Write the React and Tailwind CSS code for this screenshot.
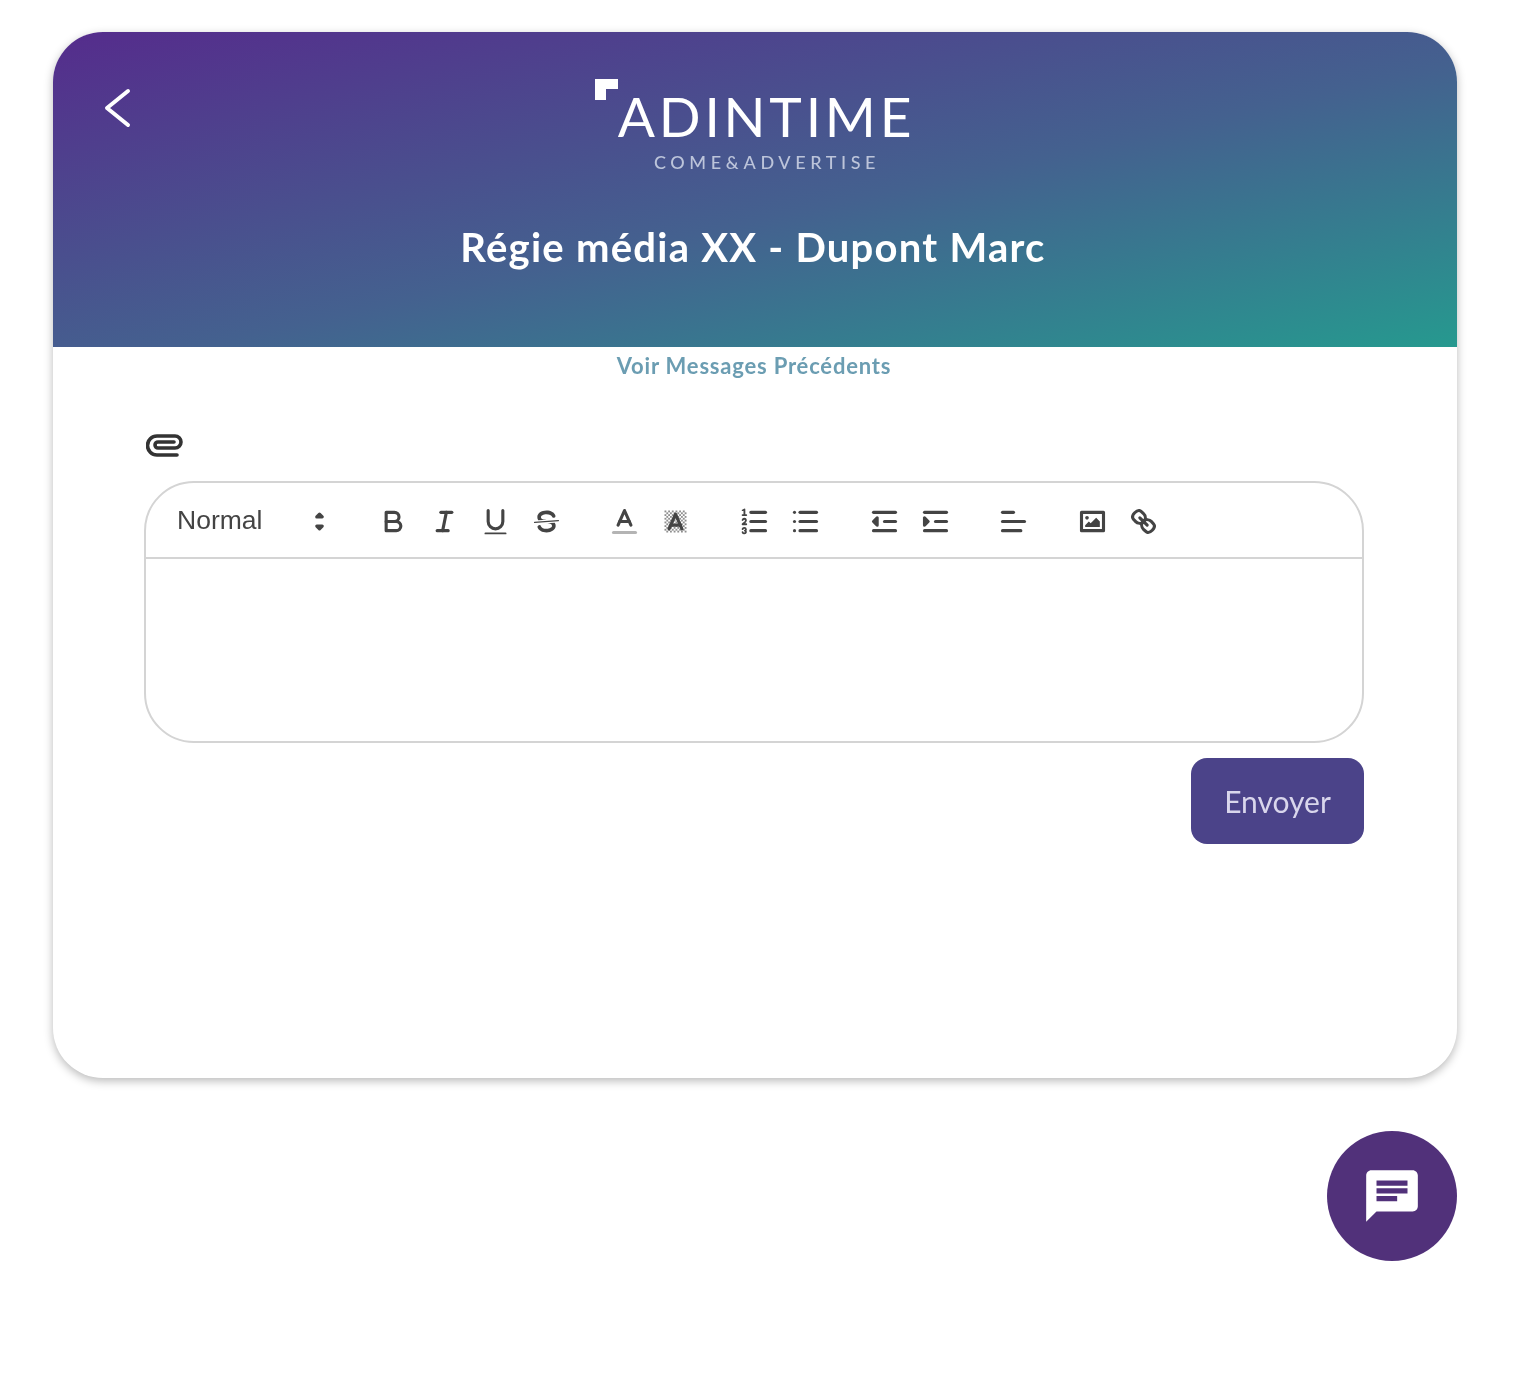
const QL = 'fill-none stroke-[#444] stroke-[1.7] [stroke-linecap:round] [stroke-linejoin:round]'
const QL_THIN = 'fill-none stroke-[#444] stroke-1 [stroke-linecap:round] [stroke-linejoin:round]'
const QL_FILL = 'fill-[#444]'

// quill snow icons, 18x18 grid
const ICONS = {
  bold: (
    <>
      <path className={QL} d="M5,4H9.5A2.5,2.5,0,0,1,12,6.5v0A2.5,2.5,0,0,1,9.5,9H5A0,0,0,0,1,5,9V4A0,0,0,0,1,5,4Z" />
      <path className={QL} d="M5,9h5.5A2.5,2.5,0,0,1,13,11.5v0A2.5,2.5,0,0,1,10.5,14H5a0,0,0,0,1,0,0V9A0,0,0,0,1,5,9Z" />
    </>
  ),
  italic: (
    <>
      <line className={QL} x1="7" x2="13" y1="4" y2="4" />
      <line className={QL} x1="5" x2="11" y1="14" y2="14" />
      <line className={QL} x1="8" x2="10" y1="14" y2="4" />
    </>
  ),
  underline: (
    <>
      <path className={QL} d="M5,3V9a4.012,4.012,0,0,0,4,4H9a4.012,4.012,0,0,0,4-4V3" />
      <rect className={QL_FILL} height="1" rx=".5" ry=".5" width="12" x="3" y="15" />
    </>
  ),
  strike: (
    <>
      <line className={`${QL_THIN} stroke-[0.7]`} x1="15.5" x2="2.5" y1="8.5" y2="9.5" />
      <path className={QL_FILL} d="M9.007,8C6.542,7.791,6,7.519,6,6.5,6,5.792,7.283,5,9,5c1.571,0,2.765.679,2.969,1.309a1,1,0,0,0,1.9-.617C13.356,4.106,11.354,3,9,3,6.2,3,4,4.538,4,6.5a3.2,3.2,0,0,0,.5,1.843Z" />
      <path className={QL_FILL} d="M8.984,10C11.457,10.208,12,10.479,12,11.5c0,.708-1.283,1.5-3,1.5-1.571,0-2.765-.679-2.969-1.309a1,1,0,1,0-1.9.617C4.644,13.894,6.646,15,9,15c2.8,0,5-1.538,5-3.5a3.2,3.2,0,0,0-.5-1.843Z" />
    </>
  ),
  color: (
    <>
      <line className={`${QL} opacity-40`} x1="3" x2="15" y1="15" y2="15" />
      <polyline className={QL} points="5.5 11 9 3 12.5 11" />
      <line className={QL} x1="11.63" x2="6.38" y1="9" y2="9" />
    </>
  ),
  background: (
    <>
      {Array.from({ length: 72 }, (_, i) => (
        <rect
          key={i}
          className={`${QL_FILL} opacity-60`}
          x={3 + (i % 6) * 2 + (Math.floor(i / 6) % 2)}
          y={3 + Math.floor(i / 6)}
          width="1"
          height="1"
        />
      ))}
      <polyline className={QL} points="5.5 13 9 5 12.5 13" />
      <line className={QL} x1="11.63" x2="6.38" y1="11" y2="11" />
    </>
  ),
  ordered: (
    <>
      <line className={QL} x1="7" x2="15" y1="4" y2="4" />
      <line className={QL} x1="7" x2="15" y1="9" y2="9" />
      <line className={QL} x1="7" x2="15" y1="14" y2="14" />
      <line className={QL_THIN} x1="2.5" x2="4.5" y1="5.5" y2="5.5" />
      <path className={QL_FILL} d="M3.5,6A0.5,0.5,0,0,1,3,5.5V3.085l-0.276.138A0.5,0.5,0,0,1,2.053,3c-0.124-.247-0.023-0.324.224-0.447l1-.5A0.5,0.5,0,0,1,4,2.5v3A0.5,0.5,0,0,1,3.5,6Z" />
      <path className={QL_THIN} d="M4.5,10.5h-2c0-.234,1.85-1.076,1.85-2.234A0.959,0.959,0,0,0,2.5,8.156" />
      <path className={QL_THIN} d="M2.5,14.846a0.959,0.959,0,0,0,1.85-.109A0.7,0.7,0,0,0,3.75,14a0.688,0.688,0,0,0,.6-0.736,0.959,0.959,0,0,0-1.85-.109" />
    </>
  ),
  bullet: (
    <>
      <line className={QL} x1="6" x2="15" y1="4" y2="4" />
      <line className={QL} x1="6" x2="15" y1="9" y2="9" />
      <line className={QL} x1="6" x2="15" y1="14" y2="14" />
      <line className={QL} x1="3" x2="3" y1="4" y2="4" />
      <line className={QL} x1="3" x2="3" y1="9" y2="9" />
      <line className={QL} x1="3" x2="3" y1="14" y2="14" />
    </>
  ),
  outdent: (
    <>
      <line className={QL} x1="3" x2="15" y1="14" y2="14" />
      <line className={QL} x1="3" x2="15" y1="4" y2="4" />
      <line className={QL} x1="9" x2="15" y1="9" y2="9" />
      <polyline className={`${QL} fill-[#444]`} points="5 7 5 11 3 9 5 7" />
    </>
  ),
  indent: (
    <>
      <line className={QL} x1="3" x2="15" y1="14" y2="14" />
      <line className={QL} x1="3" x2="15" y1="4" y2="4" />
      <line className={QL} x1="9" x2="15" y1="9" y2="9" />
      <polyline className={`${QL} fill-[#444]`} points="3 7 3 11 5 9 3 7" />
    </>
  ),
  align: (
    <>
      <line className={QL} x1="3" x2="15" y1="9" y2="9" />
      <line className={QL} x1="3" x2="13" y1="14" y2="14" />
      <line className={QL} x1="3" x2="9" y1="4" y2="4" />
    </>
  ),
  image: (
    <>
      <rect className={QL} height="10" width="12" x="3" y="4" />
      <circle className={QL_FILL} cx="6" cy="7" r="1" />
      <polyline className={QL_FILL} points="5 12 5 11 7 9 8 10 11 7 13 9 13 12 5 12" />
    </>
  ),
  link: (
    <>
      <line className={QL} x1="7" x2="11" y1="7" y2="11" />
      <path className={QL} d="M8.9,4.577a3.476,3.476,0,0,1,.36,4.679A3.476,3.476,0,0,1,4.577,8.9C3.185,7.5,2.035,6.4,4.217,4.217S7.5,3.185,8.9,4.577Z" />
      <path className={QL} d="M13.423,9.1a3.476,3.476,0,0,0-4.679-.36,3.476,3.476,0,0,0,.36,4.679c1.392,1.392,2.5,2.542,4.679.36S14.815,10.5,13.423,9.1Z" />
    </>
  ),
}

const GROUPS = [
  ['bold', 'italic', 'underline', 'strike'],
  ['color', 'background'],
  ['ordered', 'bullet'],
  ['outdent', 'indent'],
  ['align'],
  ['image', 'link'],
]

function ToolButton({ name }) {
  return (
    <button className="flex h-[43px] w-[51px] items-center justify-center">
      <svg viewBox="0 0 18 18" className="h-[33px] w-[33px]">
        {ICONS[name]}
      </svg>
    </button>
  )
}

function Toolbar() {
  return (
    <div className="flex h-[76px] items-center gap-[27.7px] border-b-2 border-[#d4d4d4] pl-[15px] pt-[2px]">
      <div className="flex w-[179px] items-center justify-between pl-[16px] pr-[4px] font-['Liberation_Sans',sans-serif] text-[26.5px] text-[#444]">
        <span>Normal</span>
        <svg viewBox="0 0 18 18" className="h-[33px] w-[33px]">
          <polygon className={`${QL} fill-[#444]`} points="7.5 11.5 9 13 10.5 11.5 7.5 11.5" />
          <polygon className={`${QL} fill-[#444]`} points="7.5 6.5 9 5 10.5 6.5 7.5 6.5" />
        </svg>
      </div>
      {GROUPS.map(group => (
        <div key={group[0]} className="flex">
          {group.map(name => (
            <ToolButton key={name} name={name} />
          ))}
        </div>
      ))}
    </div>
  )
}

function Logo() {
  return (
    <div className="flex flex-col items-center text-white">
      <div className="flex items-start">
        <svg viewBox="0 0 23 21" className="mt-[11px] h-[21px] w-[23px] fill-white">
          <path d="M0 0H23V10H11V21H0Z" />
        </svg>
        <span className="mt-[19px] font-['Lato',sans-serif] text-[55px] font-normal leading-[58px] tracking-[3.8px]">
          ADINTIME
        </span>
      </div>
      <span className="ml-[24px] mt-[7px] font-['Lato',sans-serif] text-[18px] font-medium leading-[20px] tracking-[4.6px] text-[#bcc4da]">
        COME&amp;ADVERTISE
      </span>
    </div>
  )
}

export default function App() {
  return (
    <div className="min-h-[1400px] w-[1522px] bg-white pl-[53px] pt-8 blur-[0.7px]">
      <div className="flex h-[1046px] w-[1404px] flex-col rounded-[50px] bg-white shadow-[0_3px_10px_rgba(0,0,0,0.28)]">
        <header className="h-[315px] rounded-t-[50px] bg-linear-to-br/srgb from-[#552c8c] via-[#44618f] via-55% to-[#26998f]">
          <div className="grid grid-cols-[1fr_auto_1fr] pt-[36px]">
            <button className="ml-[51px] mt-[20px] h-[40px] w-[30px] self-start">
              <svg viewBox="0 0 30 40" className="h-[40px] w-[30px] fill-none stroke-white stroke-[4] [stroke-linecap:round] [stroke-linejoin:round]">
                <polyline points="24,3 3,20 24,37" />
              </svg>
            </button>
            <Logo />
          </div>
          <h1 className="mt-[50px] pr-[4px] text-center font-['Lato',sans-serif] text-[40px] font-bold leading-[50px] tracking-[1.25px] text-white">
            Régie média XX - Dupont Marc
          </h1>
        </header>

        <div className="flex flex-1 flex-col pl-[91px] pr-[93px]">
          <a className="pt-[5px] text-center font-['Lato',sans-serif] text-[22px] font-bold leading-[28px] tracking-[0.8px] text-[#6b9db2]">
            Voir Messages Précédents
          </a>

          <svg viewBox="0 0 38 26" className="ml-[2px] mt-[52px] h-[26px] w-[38px] fill-none stroke-[#333] stroke-[3.6] [stroke-linecap:round]">
            <path d="M31 23H11a9.5 9.5 0 0 1 0-19H29a6 6 0 0 1 0 12H12a3 3 0 0 1 0-6H28" />
          </svg>

          <div className="mt-[23px] h-[262px] rounded-[50px] border-2 border-[#d4d4d4]">
            <Toolbar />
          </div>

          <div className="mt-[15px] flex justify-end">
            <button className="h-[86px] w-[173px] rounded-[16px] bg-[#4b4389] font-['Lato',sans-serif] text-[30px] text-[#d9d6ec]">
              Envoyer
            </button>
          </div>
        </div>
      </div>

      <div className="mt-[53px] flex w-[1404px] justify-end">
        <button className="flex h-[130px] w-[130px] items-center justify-center rounded-full bg-[#51317a]">
          <svg viewBox="0 0 24 24" className="h-[62px] w-[62px] fill-white">
            <path d="M20 2H4c-1.1 0-1.99.9-1.99 2L2 22l4-4h14c1.1 0 2-.9 2-2V4c0-1.1-.9-2-2-2zM6 9h12v2H6V9zm8 5H6v-2h8v2zm4-6H6V6h12v2z" />
          </svg>
        </button>
      </div>
    </div>
  )
}
